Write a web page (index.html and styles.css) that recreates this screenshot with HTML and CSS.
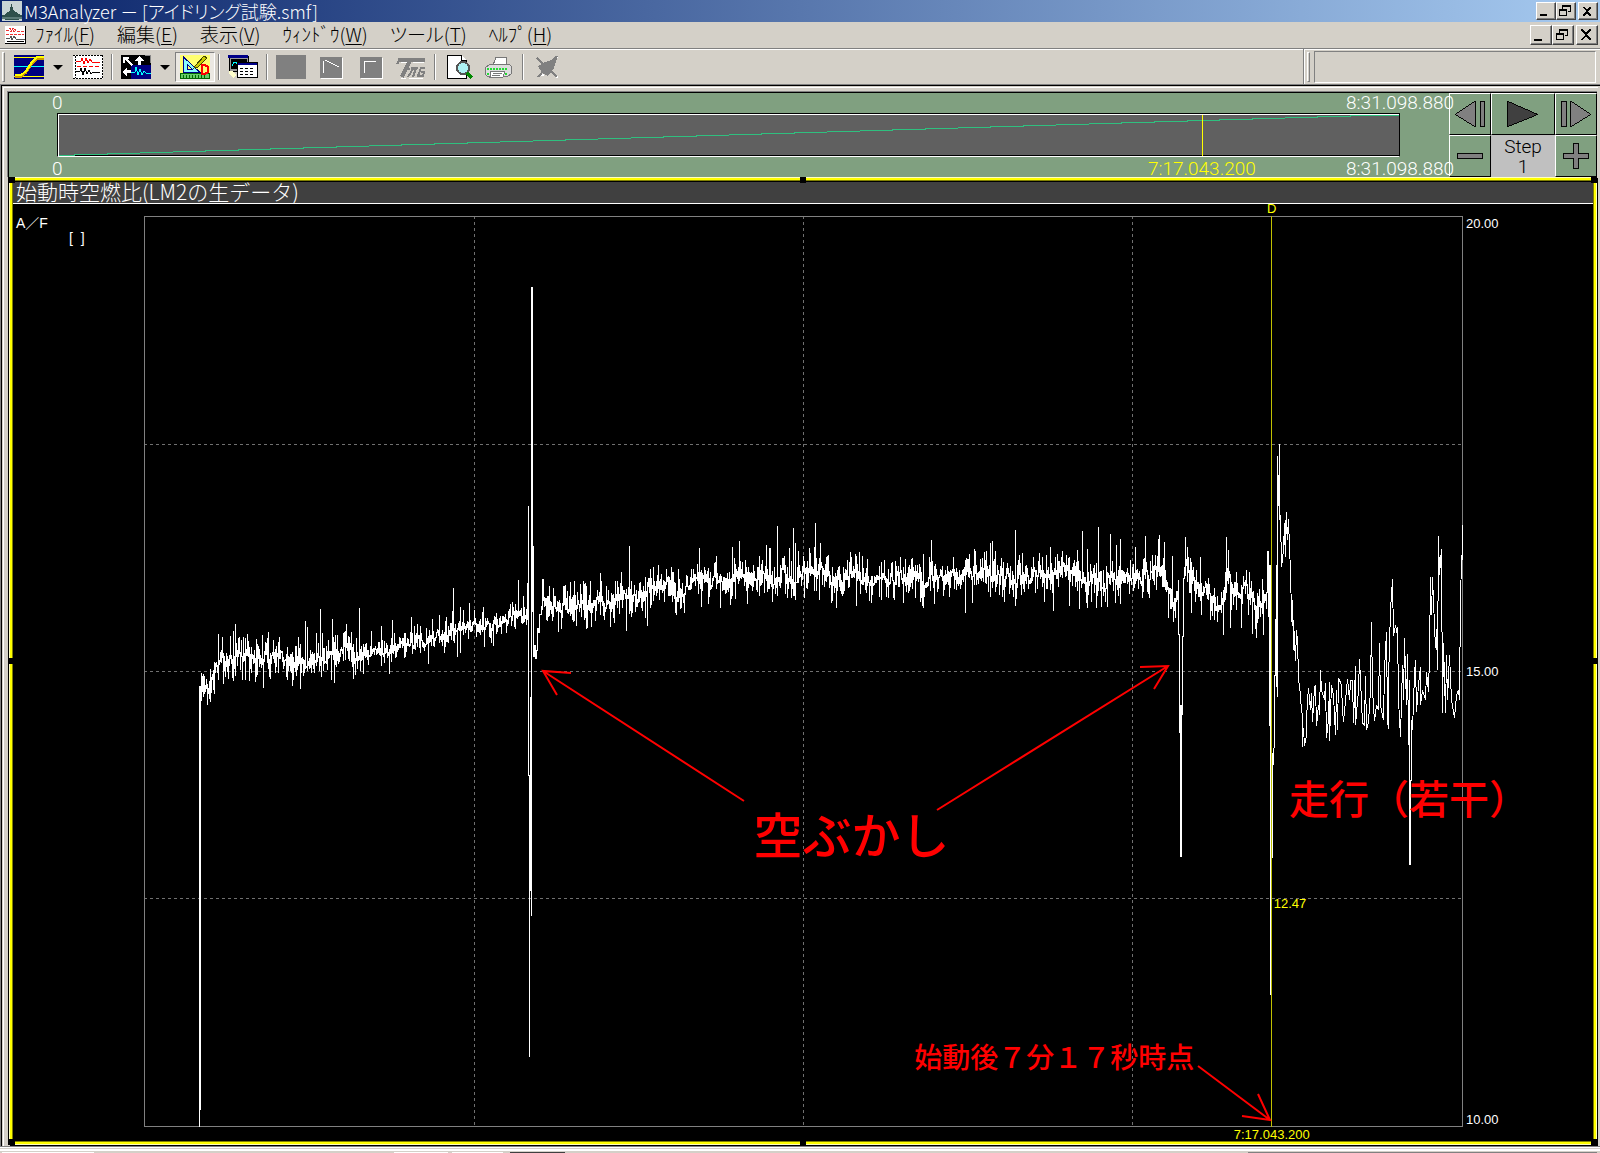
FILE: index.html
```html
<!DOCTYPE html>
<html lang="ja">
  <head>
    <meta charset="utf-8">
    <title>M3Analyzer - [アイドリング試験.smf]</title>
    <link rel="stylesheet" href="styles.css">
  </head>
  <body>
    <!--タイトルバー-->
    <header class="titlebar">
      <svg class="app-icon" viewBox="0 0 20 20">
        <rect width="20" height="20" fill="#c8d4d4"/>
        <path d="M0 14h3l2-3 3-1 1-7h1l1 6 3 2 2 2 4 1v2l-4 3H4l-4-2z" fill="#2f504c"/>
        <path d="M0 16h20v2H0z" fill="#5c7b78"/>
      </svg>
      <h1>M3Analyzer － [アイドリング試験.smf]</h1>
      <div class="winbtns">
        <button aria-label="最小化"><svg viewBox="0 0 16 14"><path d="M3 10h7v2H3z"/></svg></button>
        <button aria-label="元に戻す"><svg viewBox="0 0 16 14"><path d="M5 1h9v7h-3V7h2V3H6v2H5zM2 5h8v7H2zM3 7v4h6V7z" fill-rule="evenodd"/></svg></button>
        <button class="close" aria-label="閉じる"><svg viewBox="0 0 16 14"><path d="M4 3h2l2 3 2-3h2v1L9 7l3 4v1h-2L8 9l-2 3H4v-1l3-4-3-3z"/></svg></button>
      </div>
    </header>

    <!--メニュー-->
    <nav class="menubar">
      <svg class="doc-icon" viewBox="0 0 21 18">
        <rect width="21" height="18" fill="#fff"/>
        <path d="M0 17.500h21M20.500 0v18M2 15.500h17" stroke="#000" fill="none"/>
        <path d="M1 4h3l1-2 1 4 2-4 1 4 1-3 1 2h8M1 8h18" stroke="#e33" stroke-dasharray="3 1" fill="none"/>
        <path d="M1 12h4l1-2 1 4 2-4 2 3h9" stroke="#555" fill="none"/>
      </svg>
      <a href="#">ﾌｧｲﾙ(<u>F</u>)</a>
      <a href="#">編集(<u>E</u>)</a>
      <a href="#">表示(<u>V</u>)</a>
      <a href="#">ｳｨﾝﾄﾞｳ(<u>W</u>)</a>
      <a href="#">ツール(<u>T</u>)</a>
      <a href="#">ﾍﾙﾌﾟ(<u>H</u>)</a>
      <div class="winbtns large">
        <button aria-label="最小化"><svg viewBox="0 0 18 16"><path d="M3 12h8v2H3z"/></svg></button>
        <button aria-label="元に戻す"><svg viewBox="0 0 18 16"><path d="M6 2h9v7h-3V8h2V4H7v2H6zM3 6h8v7H3zM4 8v4h6V8z" fill-rule="evenodd"/></svg></button>
        <button class="close" aria-label="閉じる"><svg viewBox="0 0 18 16"><path d="M4 2h2l3 4 3-4h2v1l-4 5 4 4v1h-2L9 9l-3 4H4v-1l4-4-4-5z"/></svg></button>
      </div>
    </nav>

    <!--ツールバー-->
    <div class="toolbar">
      <span class="grip"></span>
      <button class="tool" aria-label="カーブ">
        <svg viewBox="0 0 30 24">
          <rect width="30" height="24" fill="#000080"/>
          <path d="M0 2.500h30M0 21.500h30" stroke="#ff0"/>
          <path d="M0 11.500h30" stroke="#0ff"/>
          <path d="M1 21h6l5-4 6-9 5-5h7" stroke="#c90" stroke-width="3" fill="none"/>
          <path d="M1 20h6l5-4 6-9 5-5h7" stroke="#ff0" stroke-width="2" fill="none"/>
        </svg>
      </button>
      <button class="drop" aria-label="カーブの選択"></button>
      <button class="tool" aria-label="波形">
        <svg viewBox="0 0 30 24">
          <rect width="30" height="24" fill="#fff"/>
          <path d="M0 .500h30M29.500 0v24M0 23.500h30M2.500 1v22" stroke="#000" stroke-dasharray="2 1"/>
          <path d="M3 6h5l1-3 2 6 2-6 2 5 2-4 2 3h8" stroke="#f00" fill="none"/>
          <path d="M4 11.500h24" stroke="#f00" stroke-dasharray="4 2"/>
          <path d="M3 16h4l1-3 2 7 2-7 2 6 2-4 2 4 2-2h7" stroke="#000" fill="none"/>
        </svg>
      </button>
      <span class="sep"></span>
      <button class="tool" aria-label="移動">
        <svg viewBox="0 0 30 24">
          <rect width="30" height="24" fill="#000"/>
          <rect x="10" y="10" width="20" height="14" fill="#000080"/>
          <path d="M2 2h6v2H6l6 6-2 1-6-6v3H2zM18 1l5 5h-3v4h-3V6h-4zM1 17l5-5v3h4v3H6v4z" fill="#fff"/>
          <path d="M10 17h4l1-5 2 8 2-6 2 6 2-4 2 2h5" stroke="#0ff" fill="none"/>
          <path d="M24 .500h6M29.500 0v8" stroke="#888"/>
        </svg>
      </button>
      <button class="drop" aria-label="移動の選択"></button>
      <button class="tool pressed" aria-label="計測">
        <svg viewBox="0 0 30 24">
          <rect width="30" height="24" fill="#ffff70"/>
          <path d="M3.500 2v15h16z" fill="#8ff" stroke="#008" stroke-width="1"/>
          <path d="M7 9v5h5z" fill="#ffff70" stroke="#008"/>
          <path d="M15 11l9-10 3 2-9 9-4 1z" fill="#cc0" stroke="#440"/>
          <path d="M0 18.500h29v5H0z" fill="#6c6" stroke="#060"/>
          <path d="M3 20v3M6 20v3M9 20v3M12 20v3M15 20v3M18 20v3M21 20v3M24 20v3" stroke="#060"/>
          <path d="M22 10h3l3 2v5l-3 2h-3z" fill="none" stroke="#f00" stroke-width="2"/>
        </svg>
      </button>
      <span class="sep"></span>
      <button class="tool" aria-label="データ表">
        <svg viewBox="0 0 30 24">
          <rect x="1" y="1" width="19" height="15" fill="#999" stroke="#000"/>
          <rect x="3" y="4" width="16" height="10" fill="#000"/>
          <path d="M0 1.500h20" stroke="#008" stroke-width="3"/>
          <path d="M4 11q3-8 6 0" stroke="#0ff" fill="none"/>
          <rect x="9.500" y="7.500" width="20" height="15" fill="#fff" stroke="#000"/>
          <path d="M10 9h19" stroke="#008" stroke-width="2"/>
          <path d="M12 13.500h15M12 16.500h15M12 19.500h15" stroke="#000" stroke-dasharray="3 2"/>
          <path d="M1 16h4l3 4-2 3-5-4z" fill="#ffc"/>
        </svg>
      </button>
      <span class="sep"></span>
      <button class="tool" disabled aria-label="停止">
        <svg viewBox="0 0 30 24"><rect width="30" height="24" fill="#808080"/></svg>
      </button>
      <button class="tool" disabled aria-label="下降">
        <svg viewBox="0 0 30 24">
          <path d="M5 3h22v21H5z" fill="#fff"/><path d="M4 2h22v21H4z" fill="#808080"/>
          <path d="M7.500 18V5.500M9 5l14 7" stroke="#fff" fill="none"/>
        </svg>
      </button>
      <button class="tool" disabled aria-label="上昇">
        <svg viewBox="0 0 30 24">
          <path d="M5 3h22v21H5z" fill="#fff"/><path d="M4 2h22v21H4z" fill="#808080"/>
          <path d="M8.500 18V6.500H20" stroke="#fff" fill="none"/>
        </svg>
      </button>
      <button class="tool" disabled aria-label="TYTG">
        <svg viewBox="0 0 30 24">
          <path d="M2 5h27M14 5L6 22" stroke="#808080" stroke-width="4" fill="none"/>
          <path d="M3 6L1 9M11 12l3 3M18 12l-6 10M15 12.500h7M20 13l-3 9M29 13h-4l-3 8h5l1-4h-3" stroke="#808080" stroke-width="2" fill="none"/>
          <path d="M5 7.500h6M17 7.500h11M5 23.500h5M13 23.500h14" stroke="#fff" fill="none"/>
        </svg>
      </button>
      <span class="sep"></span>
      <button class="tool" aria-label="印刷プレビュー">
        <svg viewBox="0 0 30 24">
          <path d="M3.500.500h14l5 5v18h-19z" fill="#fff" stroke="#000"/>
          <path d="M17.500.500v5h5" fill="#fff" stroke="#000"/>
          <circle cx="19" cy="13" r="6" fill="#aef3f5" stroke="#555" stroke-width="2"/>
          <path d="M23 18l5 5" stroke="#080" stroke-width="3"/>
        </svg>
      </button>
      <button class="tool" aria-label="印刷">
        <svg viewBox="0 0 30 24">
          <path d="M9 10l3-7.500h10L22 10" fill="#fff" stroke="#777"/>
          <path d="M1.500 12.500l4-3h20l2 2v7l-4 3h-20l-2-2z" fill="#ddd" stroke="#777"/>
          <path d="M3 13.500h21M3 18.500h21" stroke="#2d3" stroke-width="2" stroke-dasharray="2 1"/>
          <path d="M7 16h14l-2 6H6z" fill="#fff" stroke="#777"/>
          <path d="M9 18.500h9M8 20.500h8" stroke="#777"/>
        </svg>
      </button>
      <span class="sep"></span>
      <button class="tool" disabled aria-label="解除">
        <svg viewBox="0 0 30 24">
          <path d="M6 4l20 19M25 2L10 21" stroke="#fff" stroke-width="2"/>
          <path d="M5 3l20 19M25 1L6 22" stroke="#808080" stroke-width="2"/>
          <path d="M6 11l7-4 12-4-3 10-6 8-6-3z" fill="#808080"/>
        </svg>
      </button>
      <span class="dock-edge"></span>
      <span class="grip"></span>
      <div class="dock"></div>
    </div>

    <main class="workspace">
      <div class="mdi">
        <!--再生位置-->
        <section class="player">
          <div class="timeline">
            <div class="times"><span>0</span><span>8:31.098.880</span></div>
            <div class="track">
              <svg viewBox="0 0 1340 41" preserveAspectRatio="none">
                <path d="M0 40.500L1307 1.500H1340" stroke="#2fc07f" fill="none"/>
              </svg>
              <div class="marker"><span>7:17.043.200</span></div>
            </div>
            <div class="times bottom"><span>0</span><span>8:31.098.880</span></div>
          </div>
          <div class="controls">
            <button aria-label="コマ戻し"><svg viewBox="0 0 42 42"><path d="M5.500 21.500L26.500 7.500v27zM31.500 7.500h5v27h-5z"/></svg></button>
            <button aria-label="再生"><svg viewBox="0 0 64 42"><path class="dark" d="M15.500 7.500v27l32-13z"/></svg></button>
            <button aria-label="コマ送り"><svg viewBox="0 0 42 42"><path d="M5.500 7.500h5v27h-5zM15.500 7.500v27l21-13z"/></svg></button>
            <button aria-label="減らす"><svg viewBox="0 0 42 42"><path d="M7.500 18.500h27v5h-27z"/></svg></button>
            <div class="step">Step<br>1</div>
            <button aria-label="増やす"><svg viewBox="0 0 42 42"><path d="M18.500 7.500h5v11h11v5h-11v11h-5v-11h-11v-5h11z"/></svg></button>
          </div>
        </section>

        <!--グラフ-->
        <section class="pane">
          <h2>始動時空燃比(LM2の生データ)</h2>
          <div class="chart">
            <div class="y-name">A／F<span>[  ]</span></div>
            <div class="plot">
              <svg viewBox="144 216 1319 911" preserveAspectRatio="none">
                <path class="grid" d="M474.500 216V1127M803.500 216V1127M1132.500 216V1127M144 444.500H1463M144 671.500H1463M144 898.500H1463"/>
                <path class="box" d="M144.500 216.500h1318v910h-1318z"/>
                <path class="wave" id="wave" d=""/>
                <path class="cursor" d="M1271.500 216V1127"/>
                <g class="arrows">
                  <path d="M744 801L543 671M571 673L543 671L557 695"/>
                  <path d="M937 810L1168 666M1140 667L1168 666L1154 689"/>
                  <path d="M1198 1066L1270 1120M1258 1094L1270 1120L1242 1116"/>
                </g>
              </svg>
              <span class="cursor-name">D</span>
              <span class="cursor-value">12.47</span>
              <span class="cursor-time">7:17.043.200</span>
              <p class="note note-rev">空ぶかし</p>
              <p class="note note-run">走行（若干）</p>
              <p class="note note-time">始動後７分１７秒時点</p>
            </div>
            <div class="y-scale"><span>20.00</span><span>15.00</span><span>10.00</span></div>
          </div>
          <i class="handle tl"></i><i class="handle tc"></i><i class="handle tr"></i>
          <i class="handle ml"></i><i class="handle mr"></i>
          <i class="handle bl"></i><i class="handle bc"></i><i class="handle br"></i>
        </section>
      </div>
    </main>
    <footer class="statusbar"><i class="s1"></i><i class="s2"></i><i class="s3"></i><i class="s4"></i><i class="s5"></i></footer>
    <script src="wave.js"></script>
  </body>
</html>
```

FILE: styles.css
```css
* {
  box-sizing: border-box;
}
body {
  margin: 0;
  height: 100vh;
  display: flex;
  flex-direction: column;
  overflow: hidden;
  background-color: #d4d0c8;
  color: black;
  font-family: "Noto Sans CJK JP", "Liberation Sans", sans-serif;
  font-size: 19px;
  font-weight: 300;
}
button {
  padding: 0;
  border: 0;
  background: none;
  font: inherit;
}
svg {
  display: block;
  shape-rendering: crispEdges;
}
/*タイトルバー*/
.titlebar {
  display: flex;
  align-items: center;
  height: 22px;
  padding: 0 2px;
  background: linear-gradient(to right, #0a246a, #a6caf0);
}
.app-icon {
  width: 20px;
  height: 20px;
}
.titlebar h1 {
  margin: 0 0 0 2px;
  color: white;
  font-size: 18px;
  font-weight: 300;
  line-height: 18px;
  font-feature-settings: "palt";
}
.winbtns {
  display: flex;
  margin-left: auto;
}
.winbtns button {
  width: 20px;
  height: 18px;
  background-color: #d4d0c8;
  border: 1px solid;
  border-color: white #404040 #404040 white;
  box-shadow: inset -1px -1px #808080;
}
.winbtns svg {
  width: 16px;
  height: 14px;
}
.winbtns .close {
  margin-left: 2px;
}
.winbtns.large button {
  width: 22px;
  height: 20px;
}
.winbtns.large svg {
  width: 18px;
  height: 16px;
}
/*メニュー*/
.menubar {
  display: flex;
  align-items: center;
  gap: 22px;
  height: 26px;
  padding: 0 2px 0 5px;
}
.menubar a {
  height: 26px;
  color: black;
  text-decoration: none;
  line-height: 24px;
  white-space: nowrap;
  font-feature-settings: "palt";
}
.menubar u {
  text-underline-offset: 2px;
}
.doc-icon {
  width: 21px;
  height: 18px;
  margin-right: -13px;
}
/*ツールバー*/
.toolbar {
  display: flex;
  align-items: center;
  height: 36px;
  padding-left: 2px;
  border-top: 1px solid #808080;
  box-shadow: inset 0 1px white;
}
.grip {
  width: 3px;
  height: 30px;
  margin-right: 4px;
  border: 1px solid;
  border-color: white #808080 #808080 white;
}
.tool {
  width: 40px;
  height: 30px;
  padding: 3px 5px;
}
.tool svg {
  width: 30px;
  height: 24px;
}
.pressed {
  padding: 2px 4px;
  background-color: #ebe8e2;
  border: 1px solid;
  border-color: #808080 white white #808080;
}
.drop {
  width: 19px;
  height: 30px;
}
.drop::before {
  content: "";
  display: block;
  width: 0;
  margin: 1px 0 0 4px;
  border: 5px solid transparent;
  border-top-color: black;
  border-bottom: 0;
}
.sep {
  width: 2px;
  height: 26px;
  margin: 0 3px;
  background: linear-gradient(to right, #808080 50%, white 50%);
}
.dock-edge {
  align-self: stretch;
  width: 2px;
  margin-left: auto;
  margin-right: 2px;
  background: linear-gradient(to right, #808080 50%, white 50%);
}
.dock {
  width: 282px;
  height: 32px;
  margin-right: 4px;
  border: 1px solid;
  border-color: #808080 white white #808080;
}
/*作業領域*/
.workspace {
  flex: 1;
  display: flex;
  min-height: 0;
  padding: 1px 2px 0 1px;
  border-top: 1px solid #808080;
  border-left: 1px solid #808080;
  border-bottom: 1px solid #808080;
  box-shadow: inset 1px 1px black;
}
.mdi {
  flex: 1;
  display: flex;
  flex-direction: column;
  margin: 1px 0 0 1px;
  padding: 4px 1px 0 4px;
  border: 1px solid white;
  border-width: 1px 0 0 1px;
}
.player {
  display: flex;
  height: 86px;
  margin-top: -1px;
  margin-left: -1px;
  border: 1px solid #808080;
  border-width: 1px 0 0 1px;
  background-color: #80a080;
  color: white;
  box-shadow: inset 1px 1px black;
  padding: 1px 0 0 1px;
  font-family: Roboto, "Liberation Sans", sans-serif;
}
.timeline {
  flex: 1;
}
.times {
  position: relative;
  z-index: 1;
  display: flex;
  justify-content: space-between;
  height: 20px;
  margin: 0 -5px 0 43px;
  line-height: 20px;
}
.times.bottom {
  line-height: 24px;
}
.track {
  position: relative;
  height: 44px;
  margin: 0 49px 0 48px;
  padding-left: 1px;
  background-color: #606060;
  border: 1px solid black;
  border-bottom: 1px solid white;
  box-shadow: inset 1px 1px white, inset 0 -1px black;
}
.track svg {
  width: 100%;
  height: 42px;
}
.marker {
  position: absolute;
  left: 85.3%;
  top: 1px;
  width: 1px;
  height: 41px;
  background-color: yellow;
  color: yellow;
}
.marker span {
  position: absolute;
  top: 42px;
  left: 0;
  transform: translateX(-50%);
  line-height: 24px;
}
.controls {
  display: grid;
  grid-template-columns: 42px 64px 42px;
  grid-template-rows: 42px 42px;
}
.controls button {
  background-color: #80a080;
  border: 1px solid;
  border-color: white black black white;
}
.controls svg {
  width: 100%;
  height: 40px;
  fill: #808080;
  stroke: black;
}
.controls .dark {
  fill: #404040;
}
.step {
  background-color: #c0c0c0;
  color: black;
  text-align: center;
  padding-top: 2px;
  line-height: 20px;
}
/*グラフの枠*/
.pane {
  position: relative;
  flex: 1;
  display: flex;
  flex-direction: column;
  min-height: 0;
  padding: 4px;
  margin: 0 0 1px 1px;
  background-color: black;
  color: white;
  box-shadow: inset 0 0 0 1px #ffffc0, inset 0 0 0 3px yellow, inset 0 0 0 4px #808000, -1px 0 black, 1px 1px black;
}
.pane h2 {
  height: 23px;
  margin: 0;
  padding-left: 3px;
  background-color: #404040;
  border-top: 1px solid black;
  border-bottom: 1px solid white;
  font-size: 21px;
  font-weight: 300;
  line-height: 19px;
}
.handle {
  position: absolute;
  width: 6px;
  height: 6px;
  background-color: black;
}
.tl, .tc, .tr { top: 0; }
.bl, .bc, .br { bottom: 0; }
.tl, .ml, .bl { left: 0; }
.tr, .mr, .br { right: 0; }
.tc, .bc { left: calc(50% - 3px); }
.ml, .mr { top: calc(50% - 3px); }
.chart {
  flex: 1;
  display: grid;
  grid-template-columns: 131px 1fr 130px;
  min-height: 0;
  padding: 12px 0 14px;
  font-family: "Liberation Sans", "Noto Sans CJK JP", sans-serif;
  font-size: 13px;
  line-height: 15px;
}
.y-name {
  padding-left: 3px;
  font-size: 14px;
}
.y-name span {
  display: block;
  padding-left: 53px;
  white-space: pre;
}
.plot {
  position: relative;
  min-height: 0;
}
.plot svg {
  position: absolute;
  width: 100%;
  height: 100%;
  fill: none;
}
.grid {
  stroke: #707070;
  stroke-dasharray: 3 3;
}
.box {
  stroke: #808080;
}
.wave {
  stroke: white;
}
.cursor {
  stroke: #c0c000;
}
.arrows {
  stroke: red;
  stroke-width: 2px;
  shape-rendering: geometricPrecision;
}
.y-scale {
  display: flex;
  flex-direction: column;
  justify-content: space-between;
  padding-left: 3px;
}
.cursor-name,
.cursor-value,
.cursor-time {
  position: absolute;
  left: 85.5%;
  color: yellow;
}
.cursor-name {
  top: -15px;
  transform: translateX(-50%);
}
.cursor-value {
  top: 74.6%;
  padding-left: 2px;
}
.cursor-time {
  top: 100%;
  transform: translateX(-50%);
}
/*赤字のコメント*/
.note {
  position: absolute;
  margin: 0;
  color: red;
  font-family: "Noto Sans CJK JP", sans-serif;
  font-weight: 500;
  line-height: 1;
  white-space: nowrap;
}
.note-rev {
  left: 46.2%;
  top: 65%;
  font-size: 49px;
}
.note-run {
  left: 86.8%;
  top: 61.6%;
  font-size: 40px;
}
.note-time {
  left: 58.4%;
  top: 90.7%;
  font-size: 28px;
}
/*一番下*/
.statusbar {
  display: flex;
  height: 6px;
  padding: 5px 3px 0 2px;
  box-shadow: inset 0 1px white, inset 0 2px #d4d0c8, inset 0 4px white;
}
.statusbar i {
  height: 1px;
  background-color: white;
}
.s1 { width: 92px; }
.s2 { width: 54px; margin-left: 300px; }
.s3 { width: 51px; margin-left: 4px; }
.statusbar .s4 { width: 55px; margin-left: 7px; background-color: #404040; }
.statusbar .s5 { width: 349px; margin-left: auto; background-color: #808080; }
```

FILE: wave.js
```js
//基準線 [x, y]
var base = [
  [201, 696], [205, 685], [210, 680], [215, 670], [220, 658], [230, 662], [240, 655],
  [260, 657], [280, 660], [300, 659], [320, 655], [330, 652], [350, 653], [380, 651],
  [400, 644], [420, 641], [440, 634], [460, 630], [473, 625], [490, 625], [500, 620],
  [520, 613], [527, 613]
];
var base2 = [
  [544, 602], [560, 607], [580, 605], [600, 600], [605, 604], [620, 594], [640, 592],
  [650, 588], [668, 583], [677, 596], [690, 581], [720, 578], [740, 576], [760, 575],
  [800, 573], [820, 569], [833, 582], [845, 576], [870, 577], [900, 578], [950, 578],
  [990, 570], [1000, 577], [1020, 574], [1050, 577], [1065, 571], [1080, 579],
  [1100, 580], [1130, 577], [1160, 572], [1168, 592], [1178, 600]
];
var base3 = [
  [1184, 580], [1186, 558], [1190, 575], [1195, 591], [1205, 590], [1212, 602],
  [1223, 604], [1227, 570], [1231, 588], [1240, 592], [1250, 596], [1258, 605],
  [1264, 596], [1267, 580]
];
//上に出るところ x: y
var up = {
  218: 634, 233: 631, 235: 624, 243: 637, 262: 635, 268: 632, 305: 621, 307: 627,
  316: 633, 320: 609, 322: 633, 332: 619, 337: 635, 349: 637, 359: 608, 371: 631,
  381: 626, 392: 620, 411: 617, 417: 624, 439: 615, 446: 617, 453: 588, 460: 607,
  469: 603, 483: 607, 518: 580, 523: 596, 527: 583, 549: 586, 553: 588, 567: 591,
  574: 581, 580: 584, 585: 583, 590: 581, 600: 573, 621: 572, 629: 546, 650: 569,
  653: 567, 699: 548, 732: 547, 739: 541, 766: 545, 769: 548, 770: 548, 777: 526,
  789: 548, 793: 528, 795: 543, 798: 551, 814: 547, 815: 523, 820: 543, 827: 556,
  851: 557, 859: 552, 862: 556, 881: 562, 895: 561, 905: 559, 923: 554, 929: 557,
  931: 540, 953: 557, 965: 560, 974: 549, 980: 559, 986: 551, 990: 543, 992: 541,
  995: 551, 1015: 530, 1019: 555, 1033: 557, 1042: 557, 1046: 555, 1050: 547,
  1057: 554, 1062: 551, 1069: 557, 1077: 550, 1082: 531, 1087: 549, 1098: 527,
  1110: 534, 1116: 545, 1120: 539, 1135: 547, 1145: 536, 1158: 539, 1159: 535,
  1164: 542, 1172: 556, 1185: 537, 1187: 547, 1200: 557, 1226: 537, 1228: 550,
  1236: 572, 1249: 572, 1262: 579, 1267: 551
};
//下に出るところ x: y
var down = {
  214: 694, 223: 684, 235: 676, 245: 680, 255: 682, 263: 688, 300: 689, 331: 680,
  334: 683, 353: 679, 363: 674, 389: 674, 428: 664, 457: 657, 460: 653, 484: 647,
  493: 646, 558: 632, 586: 629, 603: 616, 613: 618, 626: 631, 631: 617, 645: 618,
  647: 626, 650: 608, 676: 615, 701: 607, 720: 608, 735: 599, 747: 604, 759: 596,
  804: 598, 819: 600, 831: 603, 836: 608, 856: 606, 881: 600, 894: 600, 903: 603,
  920: 602, 923: 608, 934: 604, 965: 613, 972: 603, 1015: 606, 1044: 602,
  1053: 611, 1069: 606, 1079: 609, 1087: 608, 1096: 608, 1107: 607, 1120: 604,
  1142: 598, 1168: 618, 1191: 613, 1201: 615, 1210: 620, 1223: 635, 1230: 628,
  1241: 628, 1252: 634, 1256: 638, 1263: 635
};
//一回目の空ぶかし
var rev1 = [
  [528, 506], [528, 775], [529, 775], [529, 1057], [529, 775], [530, 697], [530, 890],
  [531, 890], [531, 916], [531, 287], [532, 292], [532, 611], [533, 546], [533, 656],
  [534, 645], [535, 658], [536, 650], [537, 628], [538, 632], [539, 614], [541, 606],
  [542, 610], [542, 579], [543, 600]
];
//二回目の空ぶかし
var rev2 = [
  [1178, 580], [1178, 634], [1179, 635], [1179, 732], [1180, 705], [1180, 856],
  [1181, 776], [1181, 705], [1182, 715], [1182, 636], [1183, 636], [1183, 578]
];
//走行
var run = [
  [1268, 551], [1268, 617], [1269, 565], [1269, 726], [1270, 565], [1270, 995],
  [1270, 600], [1272, 858], [1272, 753], [1273, 765], [1274, 732], [1274, 675],
  [1275, 675], [1276, 565], [1276, 677], [1277, 697], [1277, 456], [1278, 506],
  [1279, 444], [1279, 520], [1280, 515], [1281, 567], [1283, 550], [1284, 523],
  [1284, 545], [1285, 520], [1285, 557], [1286, 512], [1287, 540], [1288, 519],
  [1289, 548], [1290, 570], [1290, 563], [1291, 622], [1292, 600], [1293, 650],
  [1293, 620], [1295, 661], [1296, 630], [1297, 655], [1297, 636], [1298, 680],
  [1299, 685], [1300, 697], [1301, 710], [1302, 715], [1302, 747], [1303, 728],
  [1304, 746], [1306, 735], [1306, 720], [1307, 700], [1308, 688], [1310, 710],
  [1311, 693], [1312, 722], [1314, 688], [1315, 685], [1316, 726], [1318, 705],
  [1319, 715], [1320, 670], [1321, 690], [1324, 700], [1325, 683], [1326, 738],
  [1328, 720], [1329, 682], [1329, 741], [1331, 685], [1333, 695], [1335, 735],
  [1336, 690], [1337, 730], [1338, 678], [1341, 685], [1342, 710], [1343, 722],
  [1347, 679], [1349, 700], [1350, 680], [1352, 680], [1353, 723], [1355, 666],
  [1355, 725], [1358, 690], [1359, 659], [1360, 680], [1362, 723], [1364, 725],
  [1365, 676], [1366, 730], [1368, 722], [1370, 690], [1371, 622], [1372, 690],
  [1374, 721], [1376, 705], [1378, 710], [1379, 643], [1380, 705], [1383, 720],
  [1384, 670], [1386, 632], [1387, 720], [1388, 729], [1388, 680], [1390, 610],
  [1392, 579], [1393, 636], [1395, 625], [1397, 635], [1397, 627], [1398, 700],
  [1400, 737], [1402, 665], [1403, 700], [1404, 638], [1406, 705], [1407, 654],
  [1408, 745], [1409, 680], [1409, 864], [1410, 864], [1410, 780], [1411, 780],
  [1411, 720], [1412, 730], [1414, 675], [1415, 660], [1416, 712], [1418, 685],
  [1420, 667], [1420, 705], [1422, 690], [1425, 700], [1426, 672], [1428, 692],
  [1429, 655], [1430, 577], [1431, 615], [1432, 577], [1434, 625], [1435, 648],
  [1436, 629], [1437, 670], [1438, 536], [1439, 575], [1441, 549], [1442, 713],
  [1443, 643], [1445, 713], [1446, 655], [1447, 700], [1449, 655], [1451, 700],
  [1454, 718], [1456, 695], [1458, 690], [1459, 700], [1459, 690], [1460, 605],
  [1461, 555], [1462, 560], [1462, 525]
];

//毎回同じ値になる乱数
var seed = 7;
function rnd() {
  seed = (seed * 16807) % 2147483647;
  return seed / 2147483647;
}

//基準線に細かい揺れをつける
function noise(list) {
  var out = [];
  var k = 0;
  var w = 0;
  for (var x = list[0][0]; x <= list[list.length - 1][0]; x++) {
    while (k < list.length - 2 && x > list[k + 1][0]) k++;
    var a = list[k];
    var b = list[k + 1];
    var y = a[1] + ((b[1] - a[1]) * (x - a[0])) / (b[0] - a[0]);
    var amp = x > 370 && x < 530 ? 14 : 19;
    w = w * 0.5 + (rnd() - 0.5) * amp * 0.7;
    var c = Math.round(y + w);
    var hi = c - Math.round(Math.pow(rnd(), 2) * amp);
    var lo = c + 1 + Math.round(Math.pow(rnd(), 2) * amp);
    if (up[x]) hi = up[x];
    if (down[x]) lo = down[x];
    out.push([x, c], [x, hi], [x, lo], [x, c]);
  }
  return out;
}

//アイドリング中は縦線と横線だけでつなぐ
var points = [[199, 1127], [199, 686], [200, 700], [200, 1110], [200, 700]].concat(
  noise(base), rev1, noise(base2), rev2, noise(base3)
);
var d = "M" + (points[0][0] + 0.5) + " " + points[0][1];
for (var i = 1; i < points.length; i++) {
  d += "H" + (points[i][0] + 0.5) + "V" + points[i][1];
}
//走行中は斜めにつなぐ
for (var j = 0; j < run.length; j++) {
  d += "L" + (run[j][0] + 0.5) + " " + run[j][1];
}
var wave = document.getElementById("wave");
wave.setAttribute("d", d);
```
